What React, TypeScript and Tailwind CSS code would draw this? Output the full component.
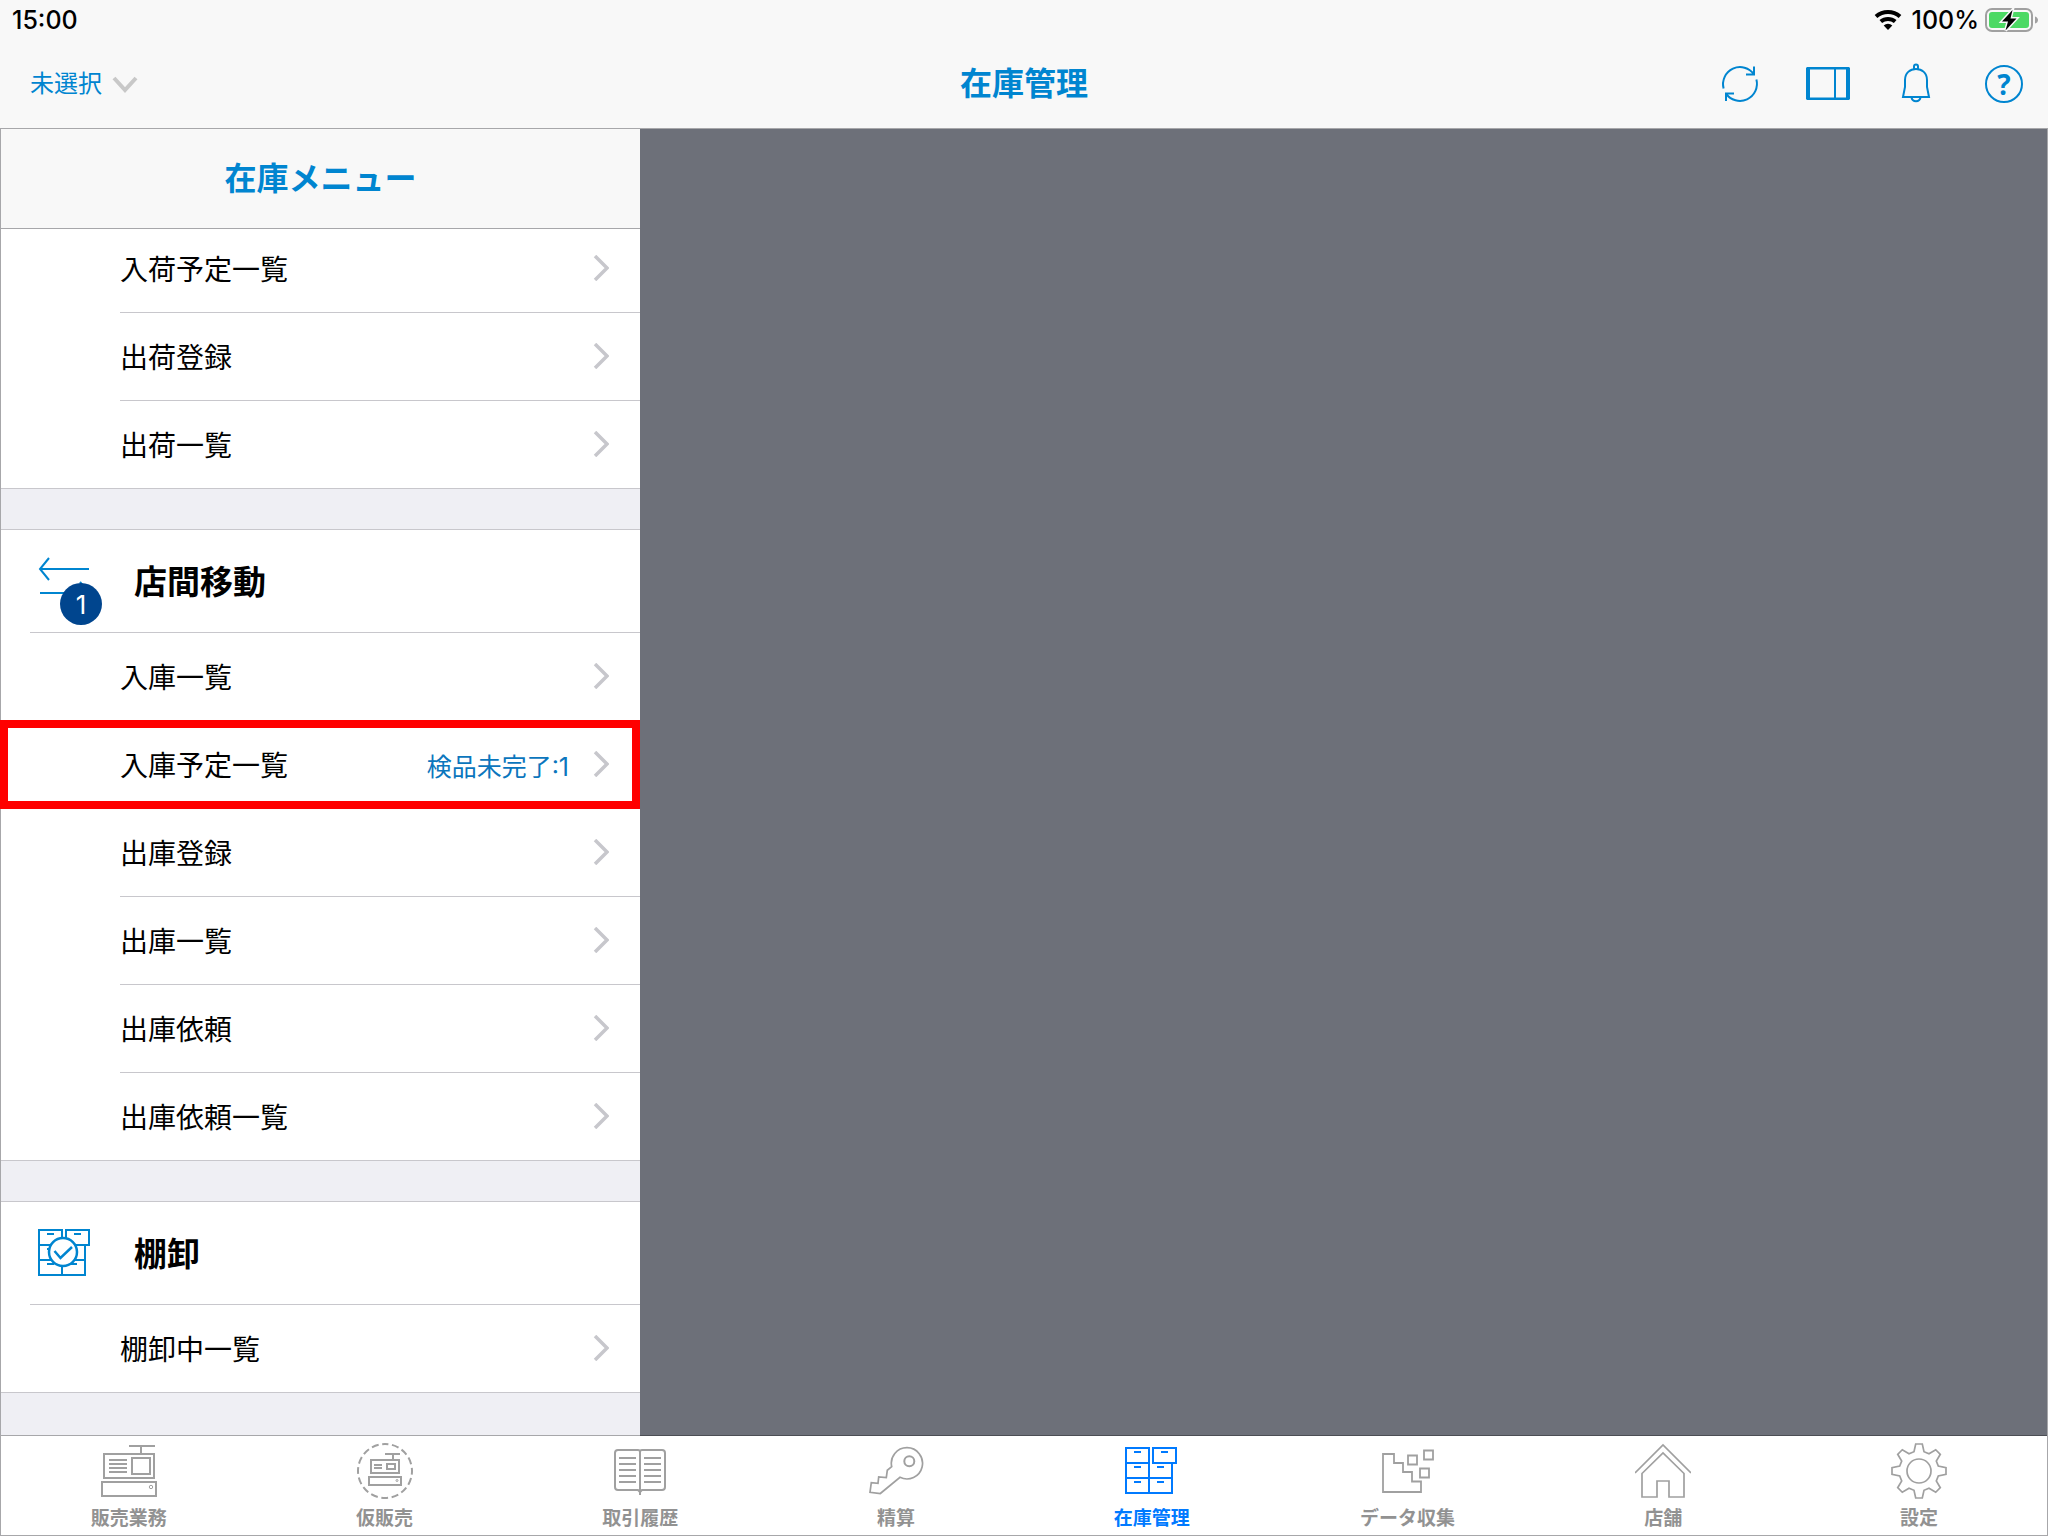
import { ReactNode, useState } from "react";
import clsx from "clsx";

type MenuItem = { label: string; detail?: string; highlighted?: boolean };
type MenuSection = {
  title?: string;
  icon?: ReactNode;
  badge?: number;
  items: MenuItem[];
};
type Tab = { label: string; icon: ReactNode };

const CabinetPath = () => (
  <path d="M2 5h23v15H2zM29 5h23v15H29zM2 20v30h46V20M2 35h46M25 20v30M10 9h7M37 9h7M10 24h7M33 24h7M10 39h7M33 39h7" />
);

const TransferIcon = () => (
  <svg width="56" height="56" fill="none" stroke="#0085d0" strokeWidth="2">
    <path d="M52 16H3M12 5l-9 11 9 11M3 40h49M43 29l9 11-9 11" />
  </svg>
);

const StocktakeIcon = () => (
  <svg width="56" height="56" fill="none" stroke="#0085d0" strokeWidth="2">
    <CabinetPath />
    <circle cx="26" cy="27" r="14" fill="#fff" strokeWidth="2.5" />
    <path d="M17.5 26l6 7L35 22" strokeWidth="2.5" />
  </svg>
);

const ChevronRight = () => (
  <svg width="16" height="26" fill="none" stroke="#c7c7cc" strokeWidth="3.5">
    <path d="M2 1L14 13 2 25" />
  </svg>
);

const TabIcon = ({ children }: { children: ReactNode }) => (
  <svg width="56" height="56" fill="none" stroke="currentColor" strokeWidth="2">
    {children}
  </svg>
);

const sections: MenuSection[] = [
  {
    items: [
      { label: "入荷予定一覧" },
      { label: "出荷登録" },
      { label: "出荷一覧" },
    ],
  },
  {
    title: "店間移動",
    icon: <TransferIcon />,
    badge: 1,
    items: [
      { label: "入庫一覧" },
      { label: "入庫予定一覧", detail: "検品未完了:1", highlighted: true },
      { label: "出庫登録" },
      { label: "出庫一覧" },
      { label: "出庫依頼" },
      { label: "出庫依頼一覧" },
    ],
  },
  {
    title: "棚卸",
    icon: <StocktakeIcon />,
    items: [{ label: "棚卸中一覧" }],
  },
];

const tabs: Tab[] = [
  {
    label: "販売業務",
    icon: (
      <TabIcon>
        <path d="M28 3h26M40 3v8M3 11h50v24H3zM31 15h18v16H31zM8 17h18M8 21h18M8 25h18M8 29h18M1 39h54v14H1z" />
        <circle cx="50" cy="44" r="1.7" strokeWidth="1" />
      </TabIcon>
    ),
  },
  {
    label: "仮販売",
    icon: (
      <TabIcon>
        <circle
          cx="28"
          cy="28"
          r="27"
          strokeDasharray="7 3.6"
          strokeDashoffset="3.5"
          transform="rotate(-90 28 28)"
        />
        <path d="M28 11h15M36 11v5M14 17h28v13H14zM30 21h8v5h-8zM17 22h8M17 25h8M12 34h32v8H12z" />
        <circle cx="40" cy="37.5" r="1" strokeWidth="1" />
      </TabIcon>
    ),
  },
  {
    label: "取引履歴",
    icon: (
      <TabIcon>
        <path d="M28 9a2 2 0 0 0-2-2H6a3 3 0 0 0-3 3v34a3 3 0 0 0 3 3h20l2 2 2-2h20a3 3 0 0 0 3-3V10a3 3 0 0 0-3-3H30a2 2 0 0 0-2 2zM28 9v43" />
        <path d="M7 15h17M7 21h17M7 27h17M7 33h17M7 39h17M32 15h17M32 21h17M32 27h17M32 33h17M32 39h17" />
      </TabIcon>
    ),
  },
  {
    label: "精算",
    icon: (
      <TabIcon>
        <path
          d="M23.7 23.7l-4.4 3.6-1 7.4-7.6-.7-.7 6.3-6.7-.6L2 49.3l10.3 1.2L32 34.3A15.6 15.6 0 1 0 23.7 23.7z"
          strokeWidth="1.7"
        />
        <circle cx="41.3" cy="18.3" r="5" />
      </TabIcon>
    ),
  },
  {
    label: "在庫管理",
    icon: (
      <TabIcon>
        <CabinetPath />
      </TabIcon>
    ),
  },
  {
    label: "データ収集",
    icon: (
      <TabIcon>
        <path
          d="M3 11h11v9h9v9h9v9.5h9V49H3zM28 12.5h9v9h-9zM44 7.5h9v9h-9zM40 25.5h9v9h-9z"
          strokeWidth="1.8"
        />
      </TabIcon>
    ),
  },
  {
    label: "店舗",
    icon: (
      <TabIcon>
        <path
          d="M0 30L28 2l28 28M7 54V30.5L28 10l21 20.5V54H34V38H22v16z"
          strokeWidth="1.7"
        />
      </TabIcon>
    ),
  },
  {
    label: "設定",
    icon: (
      <TabIcon>
        <path
          d="M24.7 1L31.3 1L33 8.7L38 10.7L44.7 6.7L49.3 11.3L45.3 18L47.3 23L55 24.7L55 31.3L47.3 33L45.3 38L49.3 44.7L44.7 49.3L38 45.3L33 47.3L31.3 55L24.7 55L23 47.3L18 45.3L11.3 49.3L6.7 44.7L10.7 38L8.7 33L1 31.3L1 24.7L8.7 23L10.7 18L6.7 11.3L11.3 6.7L18 10.7L23 8.7Z"
          strokeWidth="1.7"
        />
        <circle cx="28" cy="28" r="12" strokeWidth="1.7" />
      </TabIcon>
    ),
  },
];

const StatusBar = () => (
  <div className="flex h-10 items-center justify-between pr-2 pl-3 text-[25px] leading-10 font-medium text-black">
    <span>15:00</span>
    <div className="flex items-center">
      <svg width="28" height="20" fill="none" stroke="#000" strokeWidth="4">
        <path d="M2 6.6a18 18 0 0 1 24 0M6.8 11.6a11 11 0 0 1 14.4 0" />
        <path d="M14 20l-4.3-4.4a6.2 6.2 0 0 1 8.6 0z" fill="#000" stroke="none" />
      </svg>
      <span className="mr-1.5 ml-2.5">100%</span>
      <svg width="55" height="24" viewBox="0 0 55 24">
        <rect x="1" y="1" width="46" height="22" rx="6" fill="none" stroke="#a0a0a0" strokeWidth="2" />
        <rect x="4" y="4" width="40" height="16" rx="3" fill="#4cd964" />
        <path d="M50 8.5c4 1 4 6 0 7z" fill="#a0a0a0" />
        <path
          d="M27.5 2L17 13.5h6L20.5 22.5L31.5 10.5h-6z"
          fill="#000"
          stroke="#f8f8f8"
          strokeWidth="3"
          paintOrder="stroke"
        />
      </svg>
    </div>
  </div>
);

const HeaderActions = () => (
  <div className="flex items-center justify-end gap-11 text-[#0085d0]">
    <button aria-label="更新" className="size-11">
      <svg width="44" height="44" fill="none" stroke="currentColor" strokeWidth="2">
        <path d="M5.6 26.4A17 17 0 0 1 36 12.4M36 4.5v8h-8M38.4 17.6A17 17 0 0 1 8 31.6M8 39v-7.5h8" />
      </svg>
    </button>
    <button aria-label="パネル" className="size-11">
      <svg width="44" height="44" fill="currentColor">
        <path
          fillRule="evenodd"
          d="M1 5h42l1 1v31l-1 1H1l-1-1V6zM4 7.5v28h24v-28zM30 7.5v28h10v-28z"
        />
      </svg>
    </button>
    <button aria-label="通知" className="size-11">
      <svg width="44" height="44" fill="none" stroke="currentColor" strokeWidth="2">
        <path d="M20 7V4.5a2 2 0 0 1 4 0V7M9 35l2-10v-7C11 11 16 7 22 7s11 4 11 11v7l2 10zM17.500 35.500a4.600 4.600 0 0 0 9 0" />
      </svg>
    </button>
    <button aria-label="ヘルプ" className="flex size-11 items-center justify-center">
      <span className="flex size-[38px] items-center justify-center rounded-full border-2 border-current font-['Noto_Sans'] text-[28px] leading-8 font-bold">
        ?
      </span>
    </button>
  </div>
);

const MenuRow = ({ item, last }: { item: MenuItem; last: boolean }) => (
  <li className={clsx("relative bg-white", last && "border-b border-[#c8c7cc]")}>
    <button
      className={clsx(
        "ml-[119px] flex w-[calc(100%-119px)] items-center pr-[31px] pb-0.5 text-left",
        last ? "h-[87px]" : "h-[88px] border-b border-[#c8c7cc]"
      )}
    >
      <span className="flex-1 pt-1 text-[28px] leading-10 text-black">{item.label}</span>
      {item.detail && (
        <span className="mr-6 pt-1.5 text-[25px] leading-10 text-[#0b76bd]">{item.detail}</span>
      )}
      <ChevronRight />
    </button>
    {item.highlighted && (
      <div className="pointer-events-none absolute -top-px right-0 bottom-0 -left-px border-8 border-[#ff0000]" />
    )}
  </li>
);

const MenuGroup = ({ section }: { section: MenuSection }) => (
  <section className="mb-10">
    {section.title && (
      <div className="border-t border-[#c8c7cc] bg-white">
        <div className="ml-[29px] flex h-[103px] items-center gap-[41px] border-b border-[#c8c7cc] pl-[7px]">
          <div className="relative">
            {section.icon}
            {section.badge && (
              <span className="absolute top-[30px] left-[23px] flex size-[42px] items-center justify-center rounded-full bg-[#00458e] text-[26px] text-white">
                {section.badge}
              </span>
            )}
          </div>
          <h3 className="pt-0.5 text-[33px] leading-10 font-bold text-black">{section.title}</h3>
        </div>
      </div>
    )}
    <ul>
      {section.items.map((item, index) => (
        <MenuRow key={item.label} item={item} last={index === section.items.length - 1} />
      ))}
    </ul>
  </section>
);

const App = () => {
  const [activeTab, setActiveTab] = useState("在庫管理");

  return (
    <div className="flex h-screen flex-col bg-[#f8f8f8] font-[Inter,'Noto_Sans_CJK_JP',sans-serif]">
      <header>
        <StatusBar />
        <div className="grid h-[88px] grid-cols-[1fr_auto_1fr] items-center px-[22px]">
          <label className="flex items-center gap-2.5 pl-2">
            <select aria-label="担当者" className="appearance-none text-2xl text-[#0085d0]">
              <option>未選択</option>
            </select>
            <svg width="26" height="18" fill="none" stroke="#c8c8c8" strokeWidth="4">
              <path d="M2 3l11 12L24 3" />
            </svg>
          </label>
          <h1 className="text-[32px] leading-10 font-bold text-[#0085d0]">在庫管理</h1>
          <HeaderActions />
        </div>
      </header>

      <div className="flex min-h-0 flex-1 flex-col border border-[#a7a7aa]">
        <main className="flex min-h-0 flex-1 bg-[#6d7079]">
          <aside className="w-[639px] shrink-0 bg-[#efeff4]">
            <h2 className="relative z-10 flex h-[100px] items-center justify-center border-b border-[#a7a7aa] bg-[#f8f8f8] text-[32px] font-bold text-[#0085d0]">
              在庫メニュー
            </h2>
            <div className="-mt-1">
              {sections.map((section, index) => (
                <MenuGroup key={index} section={section} />
              ))}
            </div>
          </aside>
        </main>

        <nav className="relative -mt-px grid grid-cols-8 border-t border-black/30 bg-white bg-clip-padding">
          {tabs.map((tab) => (
            <button
              key={tab.label}
              onClick={() => setActiveTab(tab.label)}
              className={clsx(
                "flex h-[99px] flex-col items-center gap-1.5 pt-[7px]",
                tab.label === activeTab ? "text-[#007aff]" : "text-[#a0a0a0]"
              )}
            >
              {tab.icon}
              <span
                className={clsx(
                  "text-[19px] leading-7 font-bold",
                  tab.label !== activeTab && "text-[#929292]"
                )}
              >
                {tab.label}
              </span>
            </button>
          ))}
        </nav>
      </div>
    </div>
  );
};

export default App;
